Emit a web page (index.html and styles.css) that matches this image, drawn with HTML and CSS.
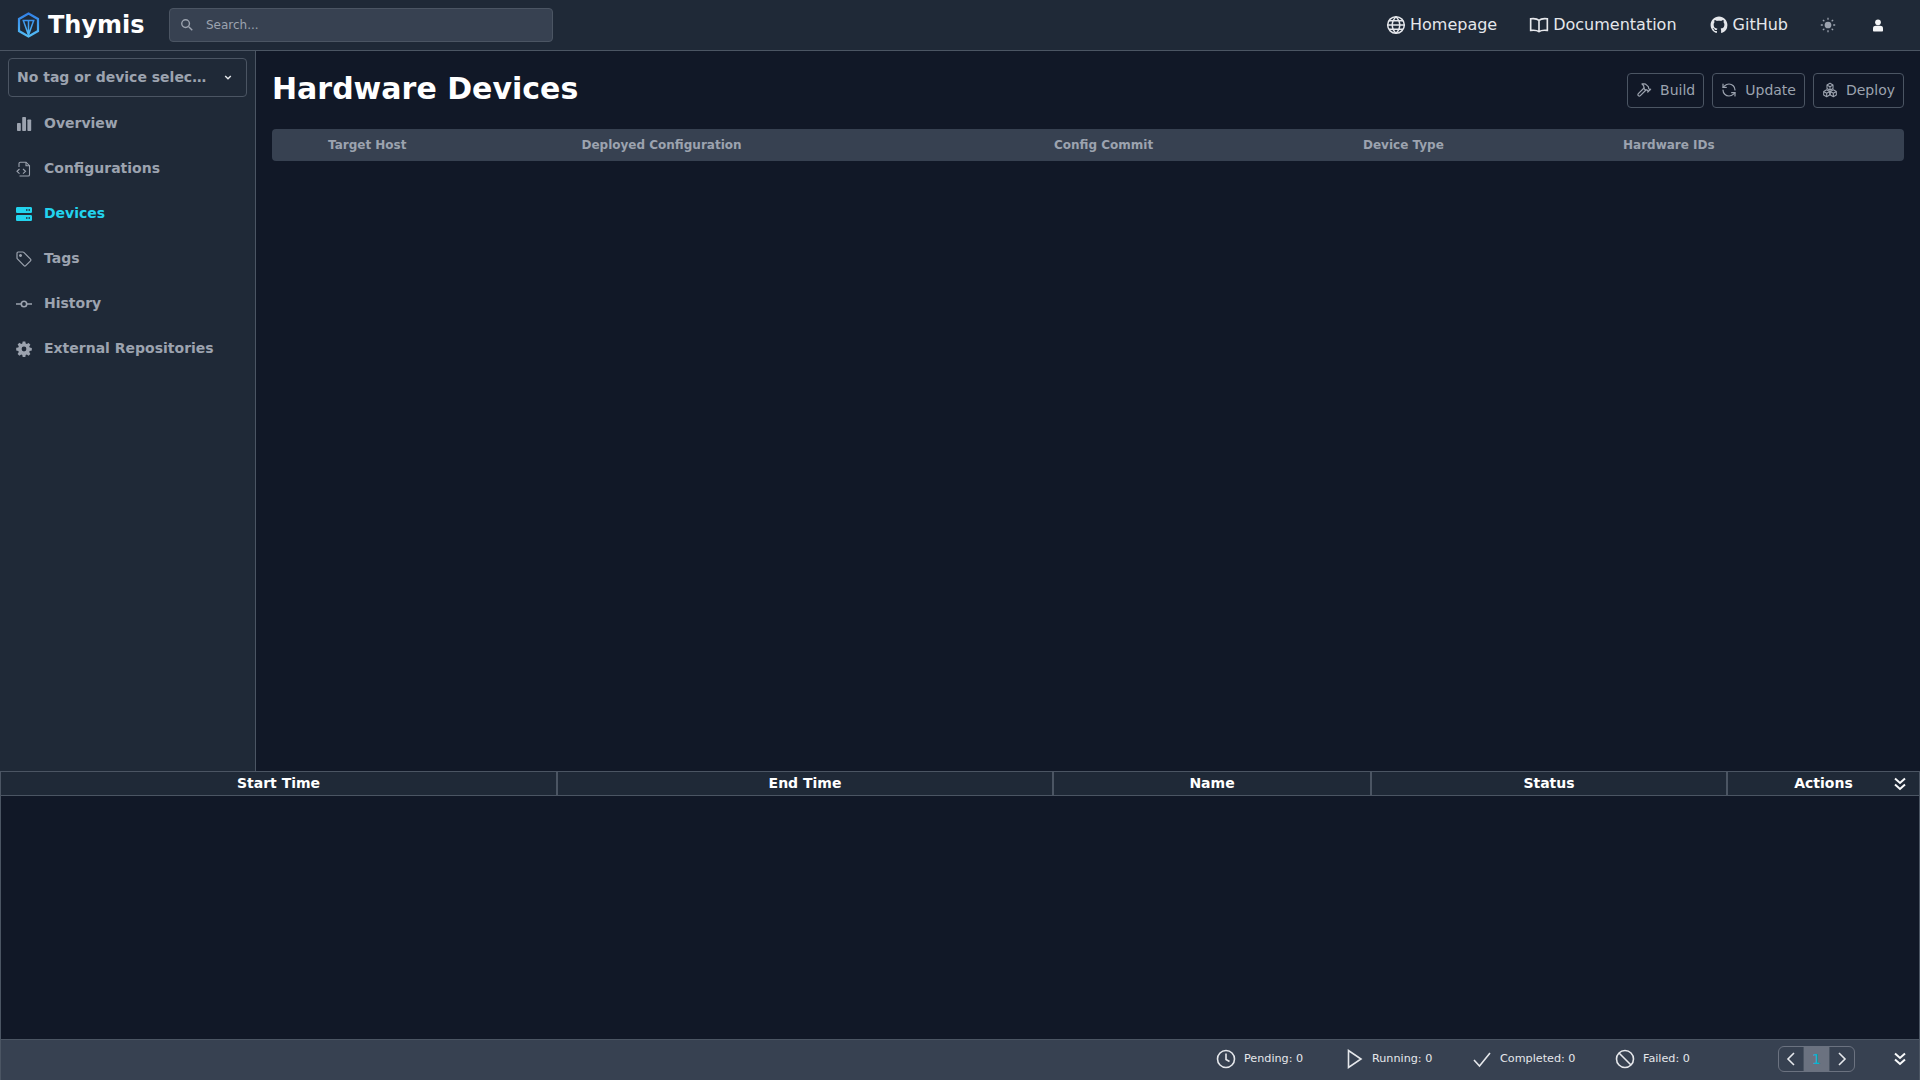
FILE: index.html
```html
<!DOCTYPE html>
<html lang="en">

<head>
    <meta charset="UTF-8">
    <title>Thymis</title>
    <link rel="stylesheet" href="styles.css">
</head>

<body>
    <nav class="navbar">
        <a class="brand">
            <svg class="brand-logo" viewBox="0 0 24 26" fill="none" stroke="url(#logoGrad)" stroke-width="2.200">
                <defs>
                    <linearGradient id="logoGrad" gradientUnits="userSpaceOnUse" x1="12" y1="0" x2="12" y2="26">
                        <stop offset="0" stop-color="#2f7de6" />
                        <stop offset="1" stop-color="#56c1f7" />
                    </linearGradient>
                </defs>
                <path d="M12.500 1.500 22 7v12l-9.500 5.500L3 19V7z" />
                <path d="M6.500 8.500h12M12.500 8.500v15M7.500 9l5 14M17.500 9l-5 14" stroke-width="1.500" />
            </svg>
            <span>Thymis</span>
        </a>
        <div class="search">
            <svg class="search-icon" viewBox="0 0 20 20" fill="none" stroke="currentColor" stroke-width="2">
                <circle cx="8" cy="8" r="5.500" />
                <path d="m12.500 12.500 5 5" />
            </svg>
            <span>Search...</span>
        </div>
        <div class="nav-links">
            <a class="nav-link">
                <svg viewBox="0 0 24 24" fill="none" stroke="currentColor" stroke-width="1.800">
                    <circle cx="12" cy="12" r="10" />
                    <path d="M2 12h20M3.500 7h17M3.500 17h17M12 2c-6 6-6 14 0 20M12 2c6 6 6 14 0 20" />
                </svg>
                <span>Homepage</span>
            </a>
            <a class="nav-link nav-link-docs">
                <svg viewBox="0 0 24 24" fill="none" stroke="currentColor" stroke-width="2">
                    <path d="M12 6.500C10 4.500 6 4 2 4.500v14c4-.5 8 0 10 1.500 2-1.500 6-2 10-1.500v-14C18 4 14 4.500 12 6.500zM12 6.500V20" />
                </svg>
                <span>Documentation</span>
            </a>
            <a class="nav-link nav-link-github">
                <svg viewBox="-1.500 -1.500 19 19" fill="currentColor">
                    <path d="M8 0C3.580 0 0 3.580 0 8c0 3.540 2.290 6.530 5.470 7.590.4.070.55-.17.55-.38 0-.19-.01-.82-.01-1.490-2.010.37-2.530-.49-2.690-.94-.09-.23-.48-.94-.82-1.130-.28-.15-.68-.52-.01-.53.63-.01 1.080.58 1.230.82.720 1.210 1.870.87 2.330.66.070-.52.280-.87.510-1.070-1.780-.2-3.640-.89-3.640-3.950 0-.87.310-1.590.820-2.150-.08-.2-.36-1.020.08-2.120 0 0 .67-.21 2.200.82.640-.18 1.320-.27 2-.27s1.360.09 2 .27c1.530-1.040 2.200-.82 2.200-.82.440 1.100.160 1.920.080 2.120.510.560.820 1.270.820 2.150 0 3.070-1.870 3.750-3.650 3.950.290.250.540.730.540 1.480 0 1.070-.010 1.930-.010 2.200 0 .21.150.460.550.380A8.010 8.010 0 0 0 16 8c0-4.420-3.580-8-8-8z" />
                </svg>
                <span>GitHub</span>
            </a>
            <svg class="theme-icon" viewBox="0 0 20 20" fill="currentColor">
                <circle cx="10" cy="10" r="4.200" />
                <path d="M10 1v2.500M10 16.500V19M1 10h2.500M16.500 10H19M3.600 3.600l1.800 1.800M14.600 14.600l1.800 1.800M3.600 16.400l1.800-1.800M14.600 5.400l1.800-1.800" stroke="currentColor" stroke-width="1.600" />
            </svg>
            <svg class="user-icon" viewBox="0 0 14 18" fill="currentColor">
                <circle cx="7" cy="4.500" r="4" />
                <path d="M0 13c0-2.500 2-3.500 4-3.500h6c2 0 4 1 4 3.500v3c0 .8-.6 1.500-1.500 1.500h-11C.6 17.500 0 16.800 0 16z" />
            </svg>
        </div>
    </nav>

    <div class="workspace">
        <aside class="sidebar">
            <div class="context-select">
                <span>No tag or device selec…</span>
                <svg viewBox="0 0 10 6" fill="none" stroke="currentColor" stroke-width="1.800">
                    <path d="m1.500 1 3.500 3.500L8.500 1" />
                </svg>
            </div>
            <ul class="side-menu">
                <li class="side-item">
                    <svg viewBox="0 0 16 16" fill="currentColor">
                        <rect x="1" y="7" width="3.800" height="8" rx=".8" />
                        <rect x="6.200" y="1" width="3.800" height="14" rx=".8" />
                        <rect x="11.400" y="3.500" width="3.800" height="11.500" rx=".8" />
                    </svg>
                    Overview
                </li>
                <li class="side-item">
                    <svg viewBox="0 0 16 16" fill="none" stroke="currentColor" stroke-width="1.100">
                        <path d="M3 6V2.500C3 1.700 3.500 1.200 4.300 1.200H10l3.500 3.500v9c0 .8-.5 1.300-1.300 1.300H3.500" />
                        <path d="M10 1.200v3.500h3.500M3.500 8 1 10.300l2.500 2.300M7 8l2.500 2.300L7 12.600" />
                    </svg>
                    Configurations
                </li>
                <li class="side-item side-item-active">
                    <svg viewBox="0 0 16 16" fill="currentColor">
                        <path fill-rule="evenodd" d="M1.300 1h13.400c.7 0 1.300.6 1.300 1.300v3.400c0 .7-.6 1.300-1.300 1.300H1.300C.6 7 0 6.400 0 5.700V2.300C0 1.600.6 1 1.300 1zM10 3.300v1.400h1.500V3.300zm2.500 0v1.400H14V3.300zM1.300 9h13.400c.7 0 1.300.6 1.300 1.300v3.400c0 .7-.6 1.300-1.300 1.300H1.300C.6 15 0 14.400 0 13.700v-3.400C0 9.600.6 9 1.300 9zM10 11.300v1.400h1.500v-1.400zm2.500 0v1.400H14v-1.400z" />
                    </svg>
                    Devices
                </li>
                <li class="side-item">
                    <svg viewBox="0 0 16 16" fill="none" stroke="currentColor" stroke-width="1.200">
                        <path d="M1 2.200c0-.7.5-1.200 1.200-1.200h4.600c.4 0 .7.100 1 .4l6.700 6.700c.5.500.5 1.200 0 1.700l-4.800 4.800c-.5.500-1.200.5-1.700 0L1.400 7.900C1.100 7.600 1 7.300 1 6.900z" />
                        <circle cx="4.500" cy="4.500" r=".9" fill="currentColor" />
                    </svg>
                    Tags
                </li>
                <li class="side-item">
                    <svg viewBox="0 0 16 16" fill="none" stroke="currentColor" stroke-width="1.600">
                        <circle cx="8" cy="8" r="2.700" />
                        <path d="M0 8h5M11 8h5" />
                    </svg>
                    History
                </li>
                <li class="side-item">
                    <svg viewBox="0 0 16 16" fill="currentColor">
                        <path fill-rule="evenodd" d="M6.700.5h2.600l.4 2.100 1.100.5 1.800-1.200 1.800 1.800-1.200 1.800.5 1.100 2.100.4v2.600l-2.100.4-.5 1.100 1.200 1.800-1.800 1.800-1.800-1.200-1.100.5-.4 2.100H6.700l-.4-2.100-1.100-.5-1.800 1.200-1.800-1.800 1.200-1.800-.5-1.100-2.100-.4V6.800l2.100-.4.5-1.100-1.200-1.800 1.800-1.800 1.800 1.200 1.100-.5zM8 5.600a2.400 2.400 0 1 0 0 4.800 2.400 2.400 0 0 0 0-4.800z" />
                    </svg>
                    External Repositories
                </li>
            </ul>
        </aside>

        <main class="content">
            <div class="content-head">
                <h1>Hardware Devices</h1>
                <div class="actions">
                    <button class="action-btn">
                        <svg viewBox="0 0 24 24" fill="none" stroke="currentColor" stroke-width="1.800" stroke-linecap="round" stroke-linejoin="round">
                            <path d="m15 12-8.500 8.500a2.120 2.120 0 0 1-3-3L12 9" />
                            <path d="M17.640 15 22 10.640" />
                            <path d="m20.910 11.700-1.250-1.250c-.6-.6-.93-1.400-.93-2.250v-.86L16.010 4.600a5.560 5.560 0 0 0-3.940-1.640H9l.92.82A6.180 6.180 0 0 1 12 8.400v1.560l2 2h2.470l2.260 1.910" />
                        </svg>
                        Build
                    </button>
                    <button class="action-btn">
                        <svg viewBox="0 0 24 24" fill="none" stroke="currentColor" stroke-width="1.800" stroke-linecap="round" stroke-linejoin="round">
                            <path d="M21 12a9 9 0 0 0-9-9 9.750 9.750 0 0 0-6.740 2.740L3 8" />
                            <path d="M3 3v5h5" />
                            <path d="M3 12a9 9 0 0 0 9 9 9.750 9.750 0 0 0 6.740-2.740L21 16" />
                            <path d="M16 16h5v5" />
                        </svg>
                        Update
                    </button>
                    <button class="action-btn">
                        <svg viewBox="0 0 24 24" fill="none" stroke="currentColor" stroke-width="1.600" stroke-linejoin="round">
                            <path d="m12 2 4.500 2.600v5.200L12 12.400l-4.500-2.600V4.600zM7.500 4.600 12 7.200l4.500-2.600M12 7.200v5.200" />
                            <path d="m7 11.600 4.500 2.600v5.200L7 22l-4.500-2.600v-5.200zM2.500 14.200 7 16.800l4.500-2.600M7 16.800V22" />
                            <path d="m17 11.600 4.500 2.600v5.200L17 22l-4.500-2.600v-5.200zM12.500 14.200l4.500 2.600 4.500-2.600M17 16.800V22" />
                        </svg>
                        Deploy
                    </button>
                </div>
            </div>
            <div class="device-table-head">
                <span class="col-host">Target Host</span>
                <span class="col-config">Deployed Configuration</span>
                <span class="col-commit">Config Commit</span>
                <span class="col-type">Device Type</span>
                <span class="col-ids">Hardware IDs</span>
            </div>
        </main>
    </div>

    <section class="tasks">
        <div class="task-head">
            <div class="task-col task-col-start">Start Time</div>
            <div class="task-col task-col-end">End Time</div>
            <div class="task-col task-col-name">Name</div>
            <div class="task-col task-col-status">Status</div>
            <div class="task-col task-col-actions">
                Actions
                <svg class="collapse-icon collapse-head" viewBox="0 0 12 14" fill="none" stroke="currentColor" stroke-width="2">
                    <path d="M1 1.500 6 6l5-4.500M1 7.500 6 12l5-4.500" />
                </svg>
            </div>
        </div>
        <div class="task-body"></div>
        <div class="task-bar">
            <div class="counter counter-pending">
                <svg viewBox="0 0 20 20" fill="none" stroke="currentColor" stroke-width="1.600">
                    <circle cx="10" cy="10" r="8.500" />
                    <path d="M10 4.500V10.500L13.500 12.500" />
                </svg>
                <span>Pending: 0</span>
            </div>
            <div class="counter counter-running">
                <svg viewBox="0 0 20 20" fill="none" stroke="currentColor" stroke-width="1.600">
                    <path d="M4.500 1.500v17L17 10z" />
                </svg>
                <span>Running: 0</span>
            </div>
            <div class="counter counter-completed">
                <svg viewBox="0 0 20 20" fill="none" stroke="currentColor" stroke-width="1.600">
                    <path d="m2 11 5.500 6L18 4" />
                </svg>
                <span>Completed: 0</span>
            </div>
            <div class="counter counter-failed">
                <svg viewBox="0 0 20 20" fill="none" stroke="currentColor" stroke-width="1.600">
                    <circle cx="10" cy="10" r="8.500" />
                    <path d="m4 4 12 12" />
                </svg>
                <span>Failed: 0</span>
            </div>
            <div class="pager">
                <span class="pager-btn">
                    <svg viewBox="0 0 10 14" fill="none" stroke="currentColor" stroke-width="1.600">
                        <path d="M8 1 2 7l6 6" />
                    </svg>
                </span>
                <span class="pager-page">1</span>
                <span class="pager-btn">
                    <svg viewBox="0 0 10 14" fill="none" stroke="currentColor" stroke-width="1.600">
                        <path d="m2 1 6 6-6 6" />
                    </svg>
                </span>
            </div>
            <svg class="collapse-icon" viewBox="0 0 12 14" fill="none" stroke="currentColor" stroke-width="2">
                <path d="M1 1.500 6 6l5-4.500M1 7.500 6 12l5-4.500" />
            </svg>
        </div>
    </section>
</body>

</html>
```

FILE: styles.css
```css
* {
    box-sizing: border-box;
}

html,
body {
    height: 100%;
}

body {
    margin: 0;
    display: flex;
    flex-direction: column;
    height: 1080px;
    overflow: hidden;
    background-color: #111827;
    color: #fff;
    font-family: "DejaVu Sans", sans-serif;
}

svg {
    display: block;
    flex-shrink: 0;
}

/* navbar */
.navbar {
    display: flex;
    align-items: center;
    height: 51px;
    padding: 0 37px 0 16px;
    background-color: #1f2937;
    border-bottom: 1px solid #4b5563;
}

.brand {
    display: flex;
    align-items: center;
    gap: 8px;
    width: 153px;
    font-size: 24px;
    font-weight: 700;
}

.brand-logo {
    width: 24px;
    height: 26px;
}

.search {
    display: flex;
    align-items: center;
    width: 384px;
    height: 34px;
    padding-left: 10px;
    background-color: #374151;
    border: 1px solid #4b5563;
    border-radius: 4px;
    color: #9ca3af;
    font-size: 12px;
}

.search-icon {
    width: 14px;
    height: 14px;
    margin-right: 12px;
}

.nav-links {
    display: flex;
    align-items: center;
    margin-left: auto;
    color: #e5e7eb;
    font-size: 16px;
}

.nav-link {
    display: flex;
    align-items: center;
    gap: 4px;
}

.nav-link span {
    margin-bottom: 2px;
}

.nav-link svg {
    width: 20px;
    height: 20px;
}

.nav-link-docs {
    margin-left: 32px;
}

.nav-link-github {
    margin-left: 32px;
}

.theme-icon {
    width: 16px;
    height: 16px;
    margin-left: 32px;
    color: #9ca3af;
}

.user-icon {
    width: 10px;
    height: 13px;
    margin-left: 37px;
    color: #f3f4f6;
}

/* sidebar + content */
.workspace {
    display: flex;
    flex: 1;
    min-height: 0;
}

.sidebar {
    width: 256px;
    padding: 7px 8px;
    background-color: #1f2937;
    border-right: 1px solid #4b5563;
}

.context-select {
    display: flex;
    align-items: center;
    justify-content: space-between;
    height: 39px;
    padding: 0 14px 0 8px;
    border: 1px solid #4b5563;
    border-radius: 4px;
    color: #9ca3af;
    font-size: 14px;
    font-weight: 700;
}

.context-select span {
    margin-bottom: 2px;
}

.context-select svg {
    width: 8px;
    height: 5px;
    color: #e5e7eb;
}

.side-menu {
    list-style-type: none;
    margin: 3px 0 0;
    padding: 0;
}

.side-item {
    display: flex;
    align-items: center;
    gap: 12px;
    height: 45px;
    padding-left: 8px;
    color: #9ca3af;
    font-size: 14px;
    font-weight: 700;
}

.side-item svg {
    width: 16px;
    height: 16px;
    margin-top: 2px;
}

.side-item-active {
    color: #22d3ee;
}

.content {
    flex: 1;
    padding: 0 16px;
}

.content-head {
    display: flex;
    align-items: center;
    justify-content: space-between;
    height: 78px;
}

h1 {
    margin: 0 0 4px;
    font-size: 30px;
    font-weight: 700;
}

.actions {
    display: flex;
    gap: 8px;
}

.action-btn {
    display: flex;
    align-items: center;
    gap: 8px;
    height: 35px;
    padding: 0 8px;
    background-color: transparent;
    border: 1px solid #4b5563;
    border-radius: 4px;
    color: #9ca3af;
    font-family: inherit;
    font-size: 14px;
}

.action-btn svg {
    width: 16px;
    height: 16px;
}

.device-table-head {
    display: flex;
    align-items: center;
    height: 32px;
    background-color: #374151;
    border-radius: 4px;
    color: #9ca3af;
    font-size: 12px;
    font-weight: 700;
}

.col-host {
    margin-left: 56px;
    width: 253.5px;
}

.col-config {
    width: 472.5px;
}

.col-commit {
    width: 309px;
}

.col-type {
    width: 260px;
}

/* task panel */
.tasks {
    display: flex;
    flex-direction: column;
    height: 309px;
    border-left: 1px solid #4b5563;
    border-right: 1px solid #4b5563;
}

.task-head {
    display: flex;
    height: 25px;
    background-color: #1f2937;
    border-top: 1px solid #4b5563;
    border-bottom: 1px solid #4b5563;
    font-size: 14px;
    font-weight: 700;
}

.task-col {
    display: flex;
    align-items: center;
    justify-content: center;
    padding-bottom: 2px;
    border-right: 2px solid #4b5563;
}

.task-col-start {
    width: 557px;
}

.task-col-end {
    width: 496px;
}

.task-col-name {
    width: 318px;
}

.task-col-status {
    width: 356px;
}

.task-col-actions {
    position: relative;
    flex: 1;
    border-right: none;
}

.task-body {
    flex: 1;
}

.collapse-icon {
    width: 12px;
    height: 14px;
    color: #f9fafb;
}

.collapse-head {
    position: absolute;
    right: 13px;
    top: 5px;
}

.task-bar {
    display: flex;
    align-items: center;
    height: 41px;
    padding: 0 13px 2px 0;
    background-color: #374151;
    border-top: 1px solid #4b5563;
    color: #e5e7eb;
    font-size: 11.2px;
}

.counter {
    display: flex;
    align-items: center;
    gap: 8px;
}

.counter span {
    margin-bottom: 2px;
}

.counter svg {
    width: 20px;
    height: 20px;
}

.counter-pending {
    margin-left: 1215px;
    width: 128px;
}

.counter-running {
    width: 128px;
}

.counter-completed {
    width: 143px;
}

.counter-failed {
    width: 163px;
}

.pager {
    display: flex;
    align-items: stretch;
    height: 26px;
    border: 1px solid #6b7280;
    border-radius: 6px;
    overflow: hidden;
}

.pager-btn {
    display: flex;
    align-items: center;
    justify-content: center;
    width: 24px;
}

.pager-btn svg {
    width: 10px;
    height: 14px;
}

.pager-page {
    display: flex;
    align-items: center;
    justify-content: center;
    width: 27px;
    background-color: #6b7280;
    border-left: 1px solid #4b5563;
    border-right: 1px solid #4b5563;
    color: #06b6d4;
    font-size: 14px;
}

.task-bar>.collapse-icon {
    margin-left: auto;
}
```
